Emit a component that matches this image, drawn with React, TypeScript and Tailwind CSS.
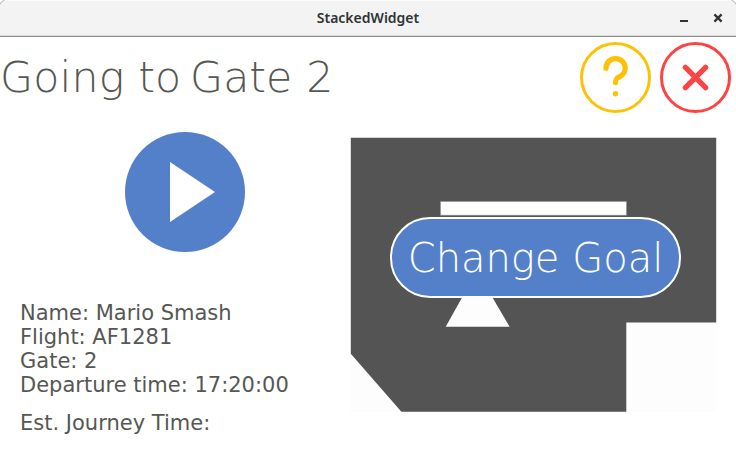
import React from "react";

function TitleBar() {
  return (
    <header className="relative flex h-[37px] items-center justify-end border-b border-[#8b8e88] bg-[#f3f3f3] shadow-[inset_0_1px_0_#fafafa,inset_0_-1px_0_#dcdcd8]">
      <h1 className="absolute inset-x-0 top-[7px] text-center font-['Noto_Sans',sans-serif] text-[14px] leading-[21px] font-semibold text-[#2e3436]">
        StackedWidget
      </h1>
      <svg className="h-[36px] w-[70px]" viewBox="0 0 70 36" fill="none" stroke="#2e3436" strokeWidth="2">
        <path d="M14 21h8" />
        <path d="M48.4 14.4l7.2 7.2M55.6 14.4l-7.2 7.2" strokeWidth="2.3" />
      </svg>
      <svg className="absolute top-0 left-0 h-[6px] w-[6px]" viewBox="0 0 6 6">
        <path d="M0 0H5Q1 1 0 5Z" fill="white" />
        <path d="M0 4.5Q1 1 4.5 .3" fill="none" stroke="#b5b5b5" />
      </svg>
      <svg className="absolute top-0 right-0 h-[6px] w-[6px]" viewBox="0 0 6 6">
        <path d="M6 0H1Q5 1 6 5Z" fill="white" />
        <path d="M6 4.5Q5 1 1.5 .3" fill="none" stroke="#b5b5b5" />
      </svg>
    </header>
  );
}

function HelpButton() {
  return (
    <button aria-label="Help" className="h-[71px] w-[71px]">
      <svg viewBox="0 0 71 71" fill="none" stroke="#ffc107" strokeLinecap="round" strokeLinejoin="round">
        <circle cx="35.5" cy="35.5" r="34" strokeWidth="3" />
        <path
          d="M26 26.2C26 20.6 30.2 16.6 35.6 16.6C41 16.6 45.2 20.6 45.2 26C45.2 30 43 32.8 40 34.4C37 36 35.5 36.8 35.5 40.6"
          strokeWidth="5.2"
        />
        <circle cx="35.5" cy="51.7" r="2.7" fill="#ffc107" stroke="none" />
      </svg>
    </button>
  );
}

function CloseButton() {
  return (
    <button aria-label="Close" className="h-[71px] w-[71px]">
      <svg viewBox="0 0 71 71" fill="none" stroke="#fb4444" strokeLinecap="round">
        <circle cx="35.5" cy="35.5" r="34" strokeWidth="3" />
        <path d="M25.4 25.4l20.2 20.2M45.6 25.4L25.4 45.6" strokeWidth="5.4" />
      </svg>
    </button>
  );
}

function FloorMap() {
  return (
    <div className="relative h-[275px] w-[367px]">
      <svg className="h-[275px] w-[367px]" viewBox="0 0 367 275">
        <rect width="367" height="275" fill="#fdfdfd" />
        <path d="M.8 .7H366.2V185.4H276.3V274.8H51.4L.8 216.8Z" fill="#545454" />
        <path d="M90.5 64.5H276.5V78.3H90.5Z" fill="#fdfdfd" stroke="#8c8c8c" strokeWidth=".5" />
        <path d="M113.5 158H141L159.6 189.7H95.7Z" fill="#fdfdfd" />
      </svg>
      <button className="absolute top-[80px] left-[40px] flex h-[81px] w-[291px] items-center justify-center rounded-[40px] border-2 border-white bg-[#5480c9] font-['DejaVu_Sans',sans-serif] text-[40px] font-extralight whitespace-nowrap text-white">
        Change Goal
      </button>
    </div>
  );
}

const details = ["Name: Mario Smash", "Flight: AF1281", "Gate: 2", "Departure time: 17:20:00"];

export default function App() {
  return (
    <div className="flex h-[453px] w-[736px] flex-col overflow-hidden bg-white font-['DejaVu_Sans',sans-serif] text-[#555753]">
      <TitleBar />
      <div className="flex h-[81px] items-start justify-between pt-[5px] pr-[5px]">
        <h2 className="text-[42.67px] leading-[70px] font-extralight whitespace-nowrap">
          <span className="tracking-[0.2px]">Going</span> <span className="-mr-[4.5px]">to</span>{" "}
          <span className="mr-[0.5px]">Gate</span> <span>2</span>
        </h2>
        <div className="flex gap-[9px]">
          <HelpButton />
          <CloseButton />
        </div>
      </div>
      <main className="flex flex-1">
        <section className="flex w-[350px] flex-col pt-[14px] pl-5">
          <button aria-label="Start" className="ml-[105px] h-[120px] w-[120px]">
            <svg viewBox="0 0 120 120">
              <circle cx="60" cy="60" r="60" fill="#5480c9" />
              <path d="M45 30L90 60L45 90Z" fill="white" />
            </svg>
          </button>
          <div className="mt-[49px] text-[21px] leading-[24px] whitespace-nowrap">
            {details.map((line) => (
              <p key={line}>{line}</p>
            ))}
            <p className="mt-[14px]">Est. Journey Time:</p>
          </div>
        </section>
        <section className="pt-[19px]">
          <FloorMap />
        </section>
      </main>
    </div>
  );
}
